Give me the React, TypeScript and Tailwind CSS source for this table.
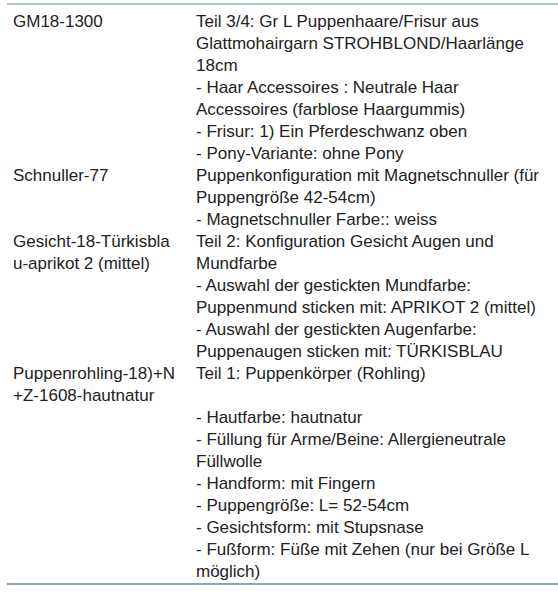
import * as React from "react";

type Row = { sku: string; lines: string[] };

const rows: Row[] = [
  {
    sku: "GM18-1300",
    lines: [
      "Teil 3/4: Gr L Puppenhaare/Frisur aus Glattmohairgarn STROHBLOND/Haarlänge 18cm",
      "- Haar Accessoires : Neutrale Haar Accessoires (farblose Haargummis)",
      "- Frisur: 1) Ein Pferdeschwanz oben",
      "- Pony-Variante: ohne Pony",
    ],
  },
  {
    sku: "Schnuller-77",
    lines: [
      "Puppenkonfiguration mit Magnetschnuller (für Puppengröße 42-54cm)",
      "- Magnetschnuller Farbe:: weiss",
    ],
  },
  {
    sku: "Gesicht-18-Türkisblau-aprikot 2 (mittel)",
    lines: [
      "Teil 2: Konfiguration Gesicht Augen und Mundfarbe",
      "- Auswahl der gestickten Mundfarbe: Puppenmund sticken mit: APRIKOT 2 (mittel)",
      "- Auswahl der gestickten Augenfarbe: Puppenaugen sticken mit: TÜRKISBLAU",
    ],
  },
  {
    sku: "Puppenrohling-18)+N+Z-1608-hautnatur",
    lines: [
      "Teil 1: Puppenkörper (Rohling)",
      "",
      "- Hautfarbe: hautnatur",
      "- Füllung für Arme/Beine: Allergieneutrale Füllwolle",
      "- Handform: mit Fingern",
      "- Puppengröße: L= 52-54cm",
      "- Gesichtsform: mit Stupsnase",
      "- Fußform: Füße mit Zehen (nur bei Größe L möglich)",
    ],
  },
];

export default function App() {
  return (
    <div className="w-[558px] h-[600px] bg-white pt-[3px] font-['Liberation_Sans',Arial,sans-serif] text-[17px] leading-[22px] text-[#222]">
      <div className="ml-[7px] border-t-2 border-b-2 border-t-[#aec4d3] border-b-[#8ea2ad] pt-[6px] pl-[6px]">
        {rows.map((row) => (
          <div key={row.sku} className="grid grid-cols-[164px_349px] gap-x-[19px]">
            <div className="break-all">{row.sku}</div>
            <div>
              {row.lines.map((line, i) => (
                <div key={i} className="min-h-[22px]">
                  {line}
                </div>
              ))}
            </div>
          </div>
        ))}
      </div>
    </div>
  );
}
